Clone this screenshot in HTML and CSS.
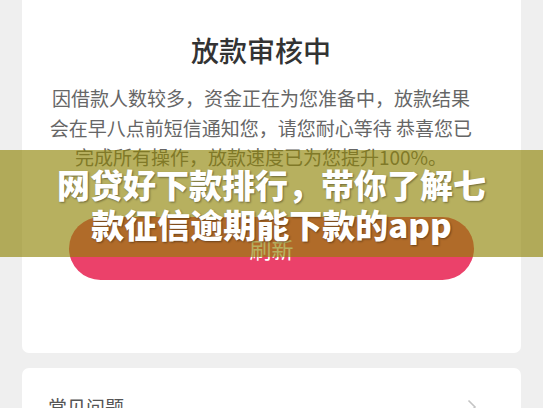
FILE: index.html
```html
<!DOCTYPE html>
<html lang="zh-CN">
<head>
    <meta charset="UTF-8">
    <meta name="viewport" content="width=device-width, initial-scale=1.0">
    <title>放款审核中</title>
    <link rel="stylesheet" href="styles.css">
</head>
<body>
    <div class="page">
        <div class="card status-card">
            <h1 class="status-title">放款审核中</h1>
            <p class="status-text">因借款人数较多，资金正在为您准备中，放款结果会在早八点前短信通知您，请您耐心等待 恭喜您已完成所有操作，放款速度已为您提升100%。</p>
            <button class="refresh-btn">刷新</button>
        </div>
        <div class="card faq-card">
            <span class="faq-label">常见问题</span>
            <svg class="faq-arrow" width="10" height="16" viewBox="0 0 10 16">
                <path d="M1.5 1.5 L8 8 L1.5 14.5" fill="none" stroke="#c4c4c4" stroke-width="1.6"/>
            </svg>
        </div>
    </div>
    <div class="banner">
        <div class="banner-text">网贷好下款排行，带你了解七款征信逾期能下款的app</div>
    </div>
</body>
</html>
```

FILE: styles.css
```css
body {
    margin: 0;
    background-color: #efefef;
    font-family: "Noto Sans CJK SC", "Noto Sans", sans-serif;
    overflow: hidden;
}
.page {
    padding: 0 22px;
}
.card {
    background-color: #fff;
    border-radius: 7px;
}
.status-card {
    margin-top: -20px;
    padding: 50px 0 73px;
}
.status-title {
    margin: 0 45px 0 24px;
    font-size: 28px;
    line-height: 40px;
    font-weight: 500;
    color: #333;
    text-align: center;
}
.status-text {
    margin: 13px 45px 0 24px;
    font-size: 19px;
    line-height: 29.5px;
    color: #666;
    text-align: center;
}
.refresh-btn {
    display: block;
    width: 405px;
    height: 63px;
    margin: 45px auto 0;
    border: none;
    border-radius: 32px;
    background-color: #eb416a;
    color: #fff;
    font-family: inherit;
    font-size: 22px;
}
.faq-card {
    margin-top: 15px;
    padding: 26px 44px 20px 26px;
    display: flex;
    align-items: center;
    justify-content: space-between;
}
.faq-label {
    font-size: 19px;
    line-height: 26px;
    color: #555;
}
.banner {
    position: absolute;
    left: 0;
    right: 0;
    top: 150px;
    height: 107px;
    background-color: rgba(143, 131, 5, 0.64);
    display: flex;
    align-items: center;
    justify-content: center;
}
.banner-text {
    width: 450px;
    text-align: center;
    color: #fff;
    font-size: 33px;
    line-height: 40px;
    font-weight: 900;
    text-shadow: 1px 1px 2px rgba(0, 0, 0, 0.4);
}
```
